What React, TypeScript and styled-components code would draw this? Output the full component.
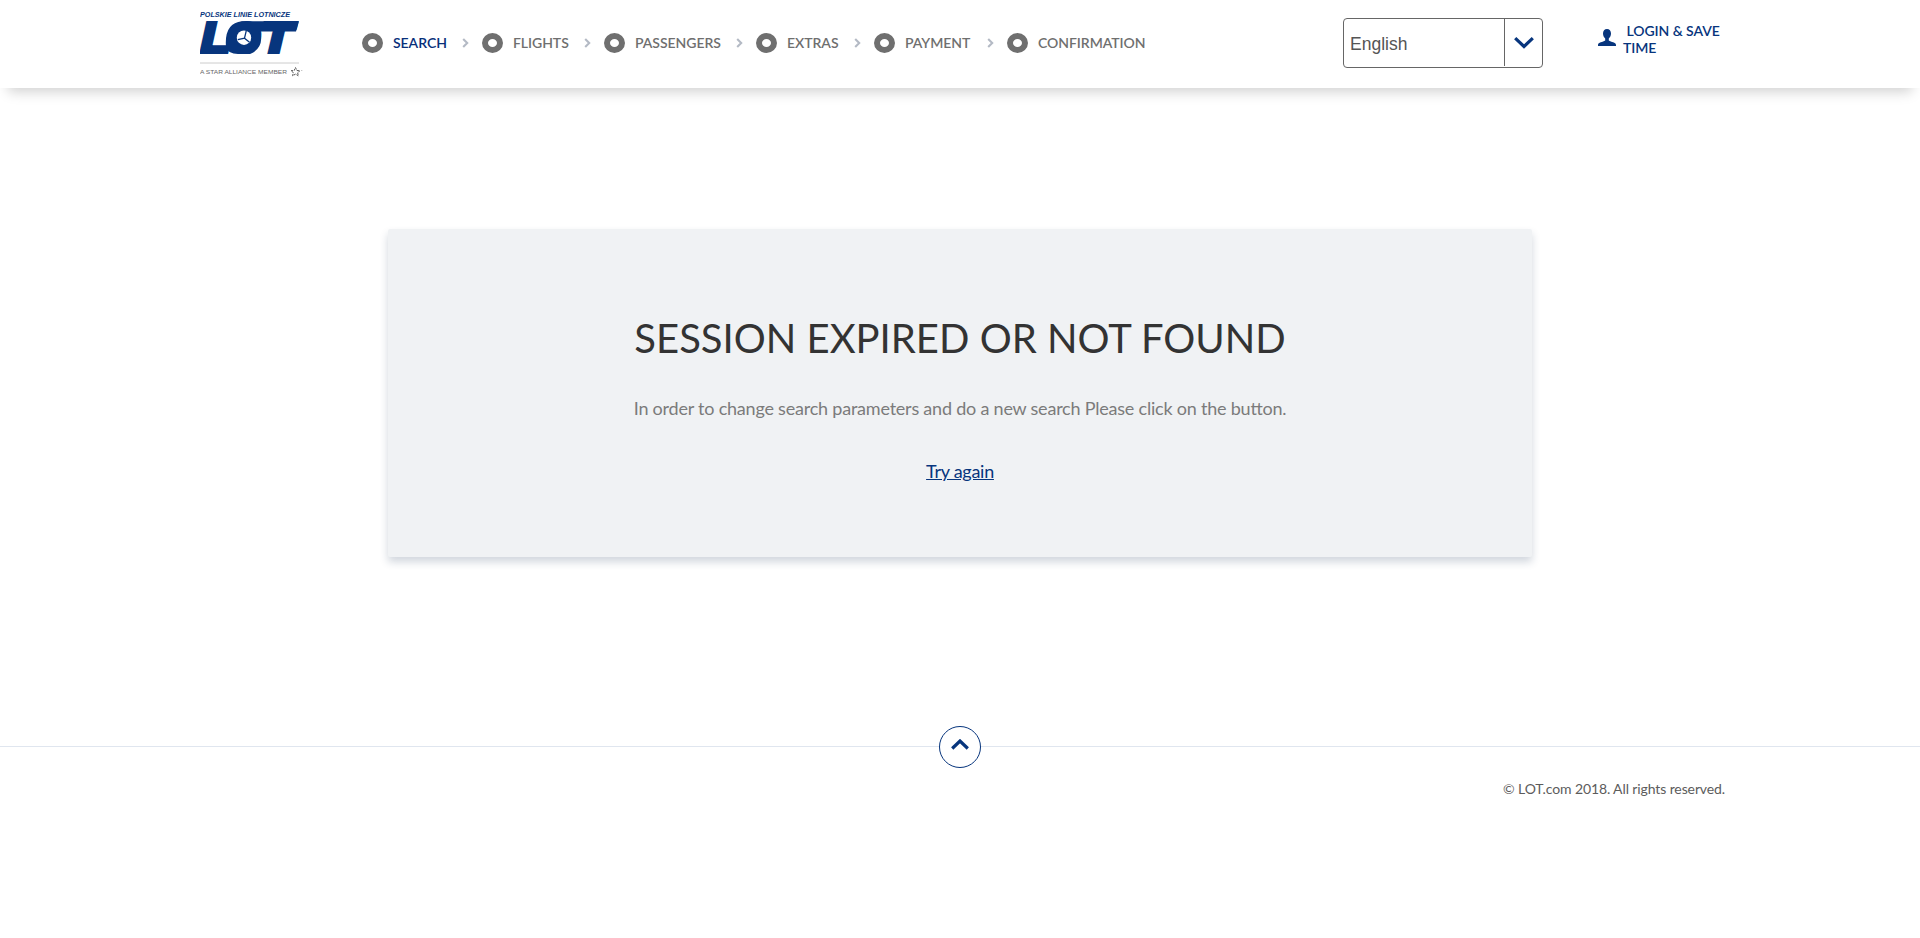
import React from "react";
import styled, { createGlobalStyle } from "styled-components";

const navy = "#07357d";

const GlobalStyle = createGlobalStyle`
  * { box-sizing: border-box; }
  body { margin: 0; background: #fff; font-family: Lato, sans-serif; color: #333; }
`;

const Page = styled.div`
  height: 938px;
  display: flex;
  flex-direction: column;
`;

const Header = styled.header`
  height: 88px;
  flex: none;
  display: flex;
  align-items: flex-start;
  padding-left: 200px;
  box-shadow: 0 12px 12px -8px rgba(0, 0, 0, 0.18);
`;

const Logo = styled.svg`
  width: 106px;
  height: 70px;
  margin-top: 9px;
  display: block;
`;

const Steps = styled.nav`
  display: flex;
  align-items: center;
  height: 20px;
  margin: 33px 0 0 56px;
  width: 981px;
`;

const Step = styled.div<{ $width: number; $active?: boolean }>`
  width: ${(p) => p.$width}px;
  display: flex;
  align-items: center;
  font-size: 14px;
  line-height: 20px;
  font-weight: 600;
  letter-spacing: -0.05px;
  white-space: nowrap;
  color: ${(p) => (p.$active ? "#08307a" : "#6f6f6f")};
`;

const Dot = styled.span`
  width: 21px;
  height: 20px;
  border: 6px solid #6f6f6f;
  border-radius: 50%;
  margin-right: 10px;
  flex: none;
`;

const Chevron = styled.svg`
  width: 7px;
  height: 10px;
  margin: 0 13px 0 auto;
`;

const Select = styled.div`
  width: 200px;
  height: 50px;
  margin-top: 18px;
  border: 1px solid #666;
  border-radius: 4px;
  display: flex;
`;

const SelectValue = styled.span`
  flex: 1;
  padding-left: 6px;
  font: 17.5px/50px "Liberation Sans", sans-serif;
  color: #555;
`;

const SelectArrow = styled.span`
  width: 38px;
  height: 47px;
  border-left: 1px solid #666;
  display: flex;
  align-items: center;
  justify-content: center;
`;

const Login = styled.a`
  display: flex;
  margin: 22px 0 0 55px;
  color: ${navy};
  font-size: 14px;
  line-height: 17px;
  font-weight: 600;
  letter-spacing: -0.05px;
`;

const LoginText = styled.span`
  margin-left: 7px;
  white-space: pre;
`;

const UserIcon = styled.svg`
  width: 18px;
  height: 18px;
  margin-top: 7px;
`;

const Card = styled.main`
  width: 1144px;
  height: 328px;
  flex: none;
  margin: 141px auto 0;
  display: flex;
  flex-direction: column;
  align-items: center;
  background: #f0f2f4;
  border-radius: 2px;
  box-shadow: 0 5px 8px rgba(27, 49, 85, 0.2);
`;

const Title = styled.h1`
  margin: 83px 0 0;
  font-size: 40px;
  line-height: 52px;
  font-weight: 400;
  white-space: nowrap;
`;

const Message = styled.p`
  margin: 31px 0 0;
  font-size: 18px;
  line-height: 26px;
  font-weight: 400;
  letter-spacing: -0.215px;
  font-feature-settings: "liga" 1;
  color: #7b7b7b;
  white-space: nowrap;
`;

const Retry = styled.a`
  margin-top: 37px;
  font-size: 18px;
  line-height: 26px;
  letter-spacing: -0.27px;
  color: ${navy};
  text-decoration: underline;
`;

const Footer = styled.footer`
  margin-top: 189px;
  border-top: 1px solid #e0e6ef;
  display: flex;
  flex-direction: column;
  align-items: center;
`;

const ToTop = styled.button`
  width: 42px;
  height: 42px;
  margin-top: -21px;
  padding: 0 1px 5px 0;
  border: 1px solid ${navy};
  border-radius: 50%;
  background: #fff;
  display: flex;
  align-items: center;
  justify-content: center;
`;

const Copyright = styled.div`
  align-self: flex-end;
  margin: 11px 195px 0 0;
  font-size: 14px;
  line-height: 20px;
  letter-spacing: -0.11px;
  color: #5c5c5c;
`;

const steps = [
  { label: "SEARCH", width: 120 },
  { label: "FLIGHTS", width: 122 },
  { label: "PASSENGERS", width: 152 },
  { label: "EXTRAS", width: 118 },
  { label: "PAYMENT", width: 133 },
  { label: "CONFIRMATION", width: 160 },
];

export default function App() {
  return (
    <>
      <GlobalStyle />
      <Page>
        <Header>
          <Logo viewBox="0 0 106 70">
            <text x="0" y="7.9" fontFamily="Liberation Sans" fontSize="7" fontWeight="700" fontStyle="italic" fill={navy} textLength="90" lengthAdjust="spacingAndGlyphs">POLSKIE LINIE LOTNICZE</text>
            <g fill={navy} stroke={navy} strokeWidth="4" fontFamily="Liberation Sans" fontWeight="700" fontStyle="italic" fontSize="42">
              <text x="1" y="43" textLength="29" lengthAdjust="spacingAndGlyphs">L</text>
              <text x="28" y="43" textLength="32" lengthAdjust="spacingAndGlyphs">O</text>
              <text x="61" y="43" textLength="31" lengthAdjust="spacingAndGlyphs">T</text>
            </g>
            {/* ribbon joining the letters around the round emblem */}
            <path d="M42 12.2H99L96 22.5H58L61 28Q62 40 50 45H38Q28 45 26 38Q24 14 42 12.2Z" fill={navy} />
            <circle cx="44" cy="28.7" r="7.2" fill="#fff" />
            <path d="M46.3 21.6L44.5 29.2L37.8 30.6M44.5 29.2L49.5 33.3" fill="none" stroke={navy} strokeWidth="1.3" />
            <path d="M0 54H99" stroke="#ccc" />
            <text x="0" y="65.3" fontFamily="Liberation Sans" fontSize="6" fill="#666" textLength="87" lengthAdjust="spacingAndGlyphs">A STAR ALLIANCE MEMBER</text>
            <path d="M95.5 58.5L96.8 61.5L100 61.7L97.6 63.7L98.4 66.8L95.5 65.1L92.6 66.8L93.4 63.7L91 61.7L94.2 61.5Z" fill="none" stroke="#555" strokeDasharray="2.2 1" />
            <circle cx="101.8" cy="61.6" r="0.5" fill="#999" />
          </Logo>
          <Steps>
            {steps.map((s, i) => (
              <Step key={s.label} $width={s.width} $active={i === 0}>
                <Dot />
                {s.label}
                {i < steps.length - 1 && (
                  <Chevron viewBox="0 0 7 10"><path d="M1.2 1L5.2 5L1.2 9" fill="none" stroke="#b4bac5" strokeWidth="2.1" /></Chevron>
                )}
              </Step>
            ))}
          </Steps>
          <Select>
            <SelectValue>English</SelectValue>
            <SelectArrow>
              <svg width="20" height="12" viewBox="0 0 20 12"><path d="M1.2 1.2L10 9.5L18.8 1.2" fill="none" stroke={navy} strokeWidth="3.2" /></svg>
            </SelectArrow>
          </Select>
          <Login>
            <UserIcon viewBox="0 0 18 18"><path d="M9 0C6.5 0 5 1.8 5 4.5C5 6.8 6 8.3 7.2 9.5V11.5C5 13.2 0 13.2 0 16V17H18V16C18 13.2 13 13.2 10.8 11.5V9.5C12 8.3 13 6.8 13 4.5C13 1.8 11.5 0 9 0Z" fill={navy} /></UserIcon>
            <LoginText>{" LOGIN & SAVE\nTIME"}</LoginText>
          </Login>
        </Header>
        <Card>
          <Title>SESSION EXPIRED OR NOT FOUND</Title>
          <Message>In order to change search parameters and do a new search Please click on the button.</Message>
          <Retry>Try again</Retry>
        </Card>
        <Footer>
          <ToTop>
            <svg width="18" height="11" viewBox="0 0 18 11"><path d="M1.2 9.5L9 2L16.8 9.5" fill="none" stroke={navy} strokeWidth="3.2" /></svg>
          </ToTop>
          <Copyright>© LOT.com 2018. All rights reserved.</Copyright>
        </Footer>
      </Page>
    </>
  );
}
